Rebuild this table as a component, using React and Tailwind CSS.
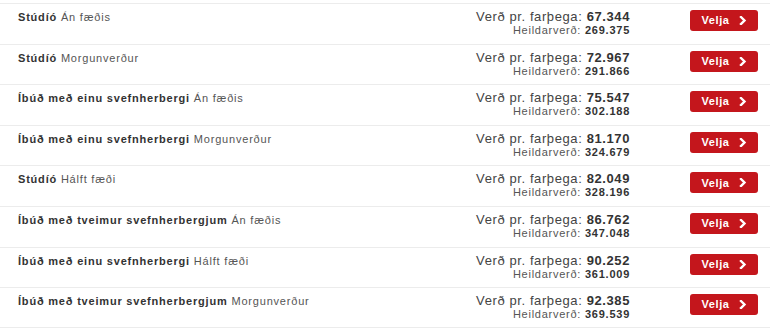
const rooms = [
  { type: "Stúdíó", board: "Án fæðis", per: "67.344", total: "269.375" },
  { type: "Stúdíó", board: "Morgunverður", per: "72.967", total: "291.866" },
  { type: "Íbúð með einu svefnherbergi", board: "Án fæðis", per: "75.547", total: "302.188" },
  { type: "Íbúð með einu svefnherbergi", board: "Morgunverður", per: "81.170", total: "324.679" },
  { type: "Stúdíó", board: "Hálft fæði", per: "82.049", total: "328.196" },
  { type: "Íbúð með tveimur svefnherbergjum", board: "Án fæðis", per: "86.762", total: "347.048" },
  { type: "Íbúð með einu svefnherbergi", board: "Hálft fæði", per: "90.252", total: "361.009" },
  { type: "Íbúð með tveimur svefnherbergjum", board: "Morgunverður", per: "92.385", total: "369.539" },
];

const Chevron = () => (
  <svg width="8" height="9" viewBox="0 0 8 9" fill="none">
    <path d="M2 1l3.5 3.5L2 8" stroke="white" strokeWidth="2.4" strokeLinecap="square" />
  </svg>
);

export default function App() {
  return (
    <div className="w-[770px] h-[330px] bg-white pt-[3px] font-['Liberation_Sans',Arial,sans-serif] overflow-hidden">
      {rooms.map((r, i) => (
        <div
          key={i}
          className="flex h-[40.6px] border-t border-[#ececec] last:border-b"
        >
          <div className="flex-1 pl-[18px] pt-[7px] text-[11px] leading-[13px] tracking-[0.8px] text-[#555]">
            <span className="font-bold text-[#333]">{r.type}</span> {r.board}
          </div>
          <div className="w-[220px] pt-[5px] text-right">
            <div className="text-[13px] leading-[15px] tracking-[0.6px] text-[#444]">
              Verð pr. farþega: <span className="font-bold text-[#333]">{r.per}</span>
            </div>
            <div className="text-[11px] leading-[13px] tracking-[0.75px] text-[#555]">
              Heildarverð: <span className="font-bold text-[#333]">{r.total}</span>
            </div>
          </div>
          <div className="w-[140px] pl-[60px] pt-[6px]">
            <button className="flex items-center justify-center gap-[9px] w-[68px] h-[21px] rounded-[3px] bg-[#c4161c] text-white text-[11px] tracking-[0.6px] font-bold">
              Velja
              <Chevron />
            </button>
          </div>
        </div>
      ))}
    </div>
  );
}
